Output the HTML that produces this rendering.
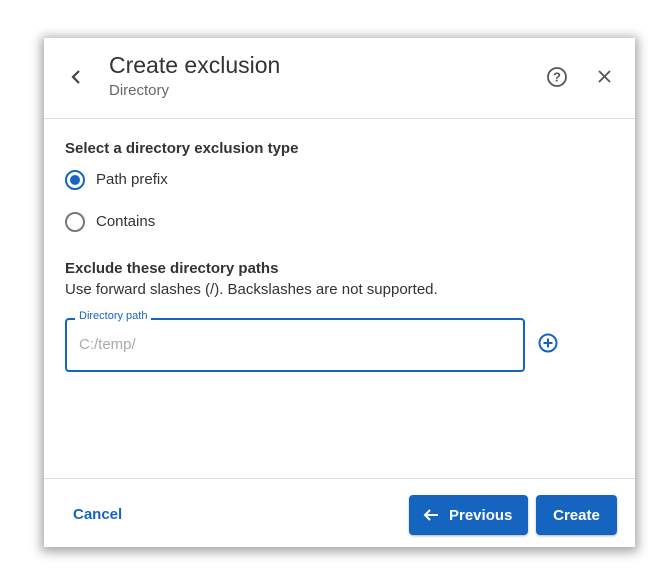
<!DOCTYPE html>
<html><head><style>
*{margin:0;padding:0;box-sizing:border-box}
body{width:669px;height:583px;background:#fff;font-family:"Liberation Sans",sans-serif;color:#333;position:relative;overflow:hidden}
.dlg{position:absolute;left:44px;top:38px;width:591px;height:509px;background:#fff;box-shadow:0 2px 10px 3px rgba(0,0,0,.35)}
.a{position:absolute;white-space:nowrap}
.btn{position:absolute;top:457px;height:40px;background:#1565c0;border-radius:4px;color:#fff;font-weight:bold;font-size:15px;line-height:40px;text-align:center;box-shadow:0 1px 2px rgba(0,0,0,.3)}
.rad{position:absolute;width:20px;height:20px;border-radius:50%;border:2px solid #777}
</style></head><body>
<div class="dlg">
<svg class="a" style="left:24px;top:31px" width="16" height="16" viewBox="0 0 16 16"><path d="M11 2L5 8l6 6" fill="none" stroke="#444" stroke-width="2.2"/></svg>
<div class="a" style="left:65px;top:14px;font-size:23px;color:#333">Create exclusion</div>
<div class="a" style="left:65px;top:44px;font-size:15px;color:#666">Directory</div>
<svg class="a" style="left:502px;top:28px" width="22" height="22" viewBox="0 0 22 22"><circle cx="11" cy="11" r="9" fill="none" stroke="#555" stroke-width="1.8"/><text x="11" y="15.5" text-anchor="middle" font-size="13" font-weight="bold" fill="#555" font-family="Liberation Sans">?</text></svg>
<svg class="a" style="left:553px;top:31px" width="15" height="15" viewBox="0 0 15 15"><path d="M2 2l11 11M13 2L2 13" stroke="#555" stroke-width="1.8"/></svg>
<div class="a" style="left:0;top:80px;width:591px;height:1px;background:#ddd"></div>
<div class="a" style="left:21px;top:102px;font-size:15px;font-weight:bold">Select a directory exclusion type</div>
<div class="rad" style="left:21px;top:132px;border-color:#1565c0"><div style="position:absolute;left:3px;top:3px;width:10px;height:10px;border-radius:50%;background:#1565c0"></div></div>
<div class="a" style="left:52px;top:133px;font-size:15px">Path prefix</div>
<div class="rad" style="left:21px;top:174px"></div>
<div class="a" style="left:52px;top:175px;font-size:15px">Contains</div>
<div class="a" style="left:21px;top:222px;font-size:15px;font-weight:bold">Exclude these directory paths</div>
<div class="a" style="left:21px;top:243px;font-size:15px">Use forward slashes (/). Backslashes are not supported.</div>
<div class="a" style="left:21px;top:280px;width:460px;height:54px;border:2px solid #1565c0;border-radius:4px"></div>
<div class="a" style="left:31px;top:272px;background:#fff;padding:0 4px;font-size:11px;color:#1565c0">Directory path</div>
<div class="a" style="left:35px;top:298px;font-size:15px;color:#aaa">C:/temp/</div>
<svg class="a" style="left:494px;top:295px" width="20" height="20" viewBox="0 0 20 20"><circle cx="10" cy="10" r="8.5" fill="none" stroke="#1565c0" stroke-width="2"/><path d="M10 5.5v9M5.5 10h9" stroke="#1565c0" stroke-width="2"/></svg>
<div class="a" style="left:0;top:440px;width:591px;height:1px;background:#ddd"></div>
<div class="a" style="left:29px;top:468px;font-size:15px;font-weight:bold;color:#1565c0">Cancel</div>
<div class="btn" style="left:365px;width:119px"><svg style="position:absolute;left:14px;top:13px" width="16" height="14" viewBox="0 0 16 14"><path d="M15 7H2M7 2L2 7l5 5" fill="none" stroke="#fff" stroke-width="2"/></svg><span style="position:absolute;left:40px;top:1px">Previous</span></div>
<div class="btn" style="left:492px;width:81px;line-height:42px">Create</div>
</div>
</body></html>
